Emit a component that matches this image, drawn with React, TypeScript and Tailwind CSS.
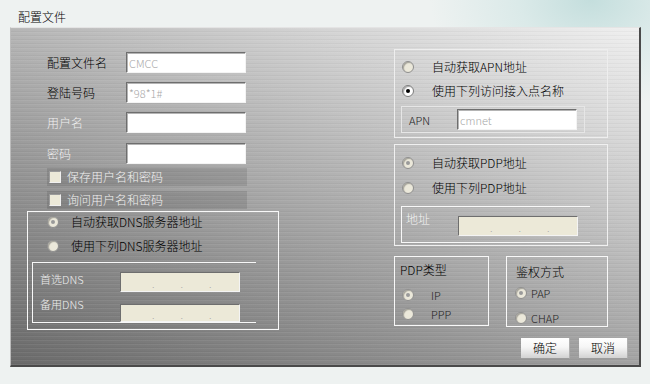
import React from "react";

const FONT = "font-[family-name:'Noto_Sans_CJK_SC','Noto_Sans',sans-serif] font-light";

function Radio({ dot, white }: { dot?: "gray" | "black"; white?: boolean }) {
  return (
    <span
      className={
        white
          ? "flex h-[12px] w-[12px] shrink-0 items-center justify-center rounded-full border border-[#7c7c7c] bg-white shadow-[inset_1px_1px_1px_rgba(0,0,0,0.35)]"
          : "flex h-[12px] w-[12px] shrink-0 items-center justify-center rounded-full border border-[#8e8e8e] bg-[#ebe8da] shadow-[inset_1px_1px_1px_rgba(0,0,0,0.3)]"
      }
    >
      {dot === "black" && <span className="h-[4px] w-[4px] rounded-full bg-black" />}
      {dot === "gray" && <span className="h-[4px] w-[4px] rounded-full bg-[#9a9a9a]" />}
    </span>
  );
}

function TextInput({ value }: { value?: string }) {
  return (
    <div className="flex h-[21px] w-[120px] items-center border-t border-l border-t-[#6e6e6e] border-l-[#6e6e6e] border-b border-r border-b-[#f4f4f4] border-r-[#f4f4f4] bg-white pl-[2px] text-[11px] leading-[12px] text-[#a8a8a8] shadow-[inset_1px_1px_0_#b4b4b4]">
      {value}
    </div>
  );
}

function IpField({ h }: { h: string }) {
  return (
    <div
      className={
        h === "20"
          ? "relative flex h-[20px] w-[120px] items-center border-t border-l border-t-[#6e6e6e] border-l-[#6e6e6e] border-b border-r border-b-[#f4f4f4] border-r-[#f4f4f4] bg-[#ece9d8] text-[10px] leading-[10px] text-[#a8a8a8]"
          : "relative flex h-[18px] w-[120px] items-center border-t border-l border-t-[#6e6e6e] border-l-[#6e6e6e] border-b border-r border-b-[#f4f4f4] border-r-[#f4f4f4] bg-[#ece9d8] text-[10px] leading-[10px] text-[#a8a8a8]"
      }
    >
      <span className="ml-[31px] pt-[4px]">.</span>
      <span className="ml-[26px] pt-[4px]">.</span>
      <span className="ml-[26px] pt-[4px]">.</span>
    </div>
  );
}

function Checkbox({ label }: { label: string }) {
  return (
    <div className="ml-[20px] flex h-[18px] w-[200px] items-center bg-black/10">
      <span className="ml-[2px] h-[12px] w-[12px] shrink-0 border-t border-l border-t-[#9a9a9a] border-l-[#9a9a9a] border-b border-r border-b-[#f0f0f0] border-r-[#f0f0f0] bg-[#ece9d8]" />
      <span className="ml-[6px] text-[12px] leading-[12px] text-[#f0f0f0]">{label}</span>
    </div>
  );
}

function Button({ label }: { label: string }) {
  return (
    <div className="flex h-[21px] w-[49px] items-center justify-center border-b border-r border-b-[#9c9c9c] border-r-[#b0b0b0] bg-[linear-gradient(180deg,#ffffff_0%,#f6f6f6_45%,#d2d2d2_100%)] text-[12px] leading-[12px] text-black">
      {label}
    </div>
  );
}

export default function App() {
  return (
    <div
      className={`h-[384px] w-[650px] overflow-hidden bg-[radial-gradient(ellipse_160px_110px_at_590px_0px,#c4dedd_0%,#dbeae9_45%,#eef2f1_100%)] ${FONT}`}
    >
      <div className="h-[27px] pl-[18px] pt-[10px] text-[12px] leading-[14px] text-black">配置文件</div>
      <div className="ml-[10px] flex h-[340px] w-[631px] flex-col border-t border-l border-t-[#e4e4e4] border-l-[#bcbcbc] border-r-2 border-b-2 border-r-[#4a4a4a] border-b-[#4a4a4a] bg-[repeating-linear-gradient(0deg,rgba(255,255,255,0.06)_0px,rgba(255,255,255,0.06)_1px,rgba(0,0,0,0.03)_1px,rgba(0,0,0,0.03)_2px,transparent_2px,transparent_4px),linear-gradient(202deg,#efefef_0%,#d4d4d4_22%,#b3b3b3_45%,#8e8e8e_72%,#6a6a6a_100%)]">
        <div className="flex">
          {/* Left column */}
          <div className="ml-[16px] flex w-[252px] flex-col pt-[24px]">
            <div className="flex h-[21px] items-center">
              <span className="ml-[20px] w-[79px] text-[12px] leading-[12px] text-black">配置文件名</span>
              <TextInput value="CMCC" />
            </div>
            <div className="mt-[9px] flex h-[21px] items-center">
              <span className="ml-[20px] w-[79px] text-[12px] leading-[12px] text-black">登陆号码</span>
              <TextInput value="*98*1#" />
            </div>
            <div className="mt-[9px] flex h-[21px] items-center">
              <span className="ml-[20px] w-[79px] text-[12px] leading-[12px] text-[#f0f0f0]">用户名</span>
              <TextInput />
            </div>
            <div className="mt-[10px] flex h-[21px] items-center">
              <span className="ml-[20px] w-[79px] text-[12px] leading-[12px] text-[#f0f0f0]">密码</span>
              <TextInput />
            </div>
            <div className="mt-[4px]">
              <Checkbox label="保存用户名和密码" />
            </div>
            <div className="mt-[5px]">
              <Checkbox label="询问用户名和密码" />
            </div>
            {/* DNS group */}
            <div className="mt-[2px] flex h-[119px] w-[252px] flex-col border border-[#f8f8f8]">
              <div className="ml-[19px] mt-[3px] flex h-[14px] items-center">
                <Radio dot="gray" />
                <span className="ml-[12px] text-[12px] leading-[12px] text-black">自动获取DNS服务器地址</span>
              </div>
              <div className="ml-[19px] mt-[10px] flex h-[14px] items-center">
                <Radio />
                <span className="ml-[12px] text-[12px] leading-[12px] text-black">使用下列DNS服务器地址</span>
              </div>
              <div className="ml-[4px] mt-[9px] flex h-[61px] w-[224px] flex-col border-t border-l border-b border-[#f8f8f8] pt-[9px]">
                <div className="flex items-start">
                  <span className="ml-[7px] w-[80px] pt-[1px] text-[11px] leading-[12px] text-[#eeeeee]">首选DNS</span>
                  <IpField h="20" />
                </div>
                <div className="mt-[12px] flex items-start">
                  <span className="-mt-[6px] ml-[7px] w-[80px] text-[11px] leading-[12px] text-[#eeeeee]">备用DNS</span>
                  <IpField h="18" />
                </div>
              </div>
            </div>
          </div>

          {/* Right column */}
          <div className="ml-[115px] flex w-[214px] flex-col pt-[21px]">
            {/* APN */}
            <div className="flex h-[89px] w-[214px] flex-col border border-[#eeeeee]">
              <div className="ml-[7px] mt-[10px] flex h-[14px] items-center">
                <Radio />
                <span className="ml-[18px] text-[12px] leading-[12px] text-black">自动获取APN地址</span>
              </div>
              <div className="ml-[7px] mt-[10px] flex h-[14px] items-center">
                <Radio dot="black" white />
                <span className="ml-[18px] text-[12px] leading-[12px] text-black">使用下列访问接入点名称</span>
              </div>
              <div className="ml-[6px] mt-[8px] flex h-[27px] w-[184px] items-center border border-[#e6e6e6]">
                <span className="ml-[7px] w-[48px] text-[11px] leading-[12px] text-[#202020]">APN</span>
                <TextInput value="cmnet" />
              </div>
            </div>

            {/* PDP address */}
            <div className="mt-[6px] flex h-[102px] w-[214px] flex-col border border-[#f0f0f0]">
              <div className="ml-[7px] mt-[11px] flex h-[14px] items-center">
                <Radio dot="gray" />
                <span className="ml-[18px] text-[12px] leading-[12px] text-black">自动获取PDP地址</span>
              </div>
              <div className="ml-[7px] mt-[11px] flex h-[14px] items-center">
                <Radio />
                <span className="ml-[18px] text-[12px] leading-[12px] text-black">使用下列PDP地址</span>
              </div>
              <div className="ml-[6px] mt-[11px] flex h-[37px] w-[189px] items-start border-t border-l border-b border-[#f8f8f8] pt-[9px]">
                <span className="-mt-[3px] ml-[4px] w-[52px] text-[12px] leading-[12px] text-[#f4f4f4]">地址</span>
                <IpField h="20" />
              </div>
            </div>

            {/* bottom pair */}
            <div className="mt-[10px] flex">
              <div className="flex h-[70px] w-[95px] flex-col border border-[#f8f8f8]">
                <span className="ml-[5px] mt-[7px] text-[12px] leading-[12px] text-black">PDP类型</span>
                <div className="ml-[7px] mt-[12px] flex h-[14px] items-center">
                  <Radio dot="gray" />
                  <span className="ml-[17px] text-[11px] leading-[12px] text-[#222222]">IP</span>
                </div>
                <div className="ml-[7px] mt-[5px] flex h-[14px] items-center">
                  <Radio />
                  <span className="ml-[17px] text-[11px] leading-[12px] text-[#222222]">PPP</span>
                </div>
              </div>
              <div className="ml-[17px] flex h-[71px] w-[102px] flex-col border border-[#f8f8f8]">
                <span className="ml-[9px] mt-[9px] text-[12px] leading-[12px] text-black">鉴权方式</span>
                <div className="ml-[8px] mt-[8px] flex h-[14px] items-center">
                  <Radio dot="gray" />
                  <span className="ml-[4px] text-[11px] leading-[12px] text-[#222222]">PAP</span>
                </div>
                <div className="ml-[8px] mt-[11px] flex h-[14px] items-center">
                  <Radio />
                  <span className="ml-[4px] text-[11px] leading-[12px] text-[#222222]">CHAP</span>
                </div>
              </div>
            </div>
          </div>
        </div>

        {/* buttons */}
        <div className="mt-[8px] flex justify-end gap-[9px] pr-[11px]">
          <Button label="确定" />
          <Button label="取消" />
        </div>
      </div>
    </div>
  );
}
